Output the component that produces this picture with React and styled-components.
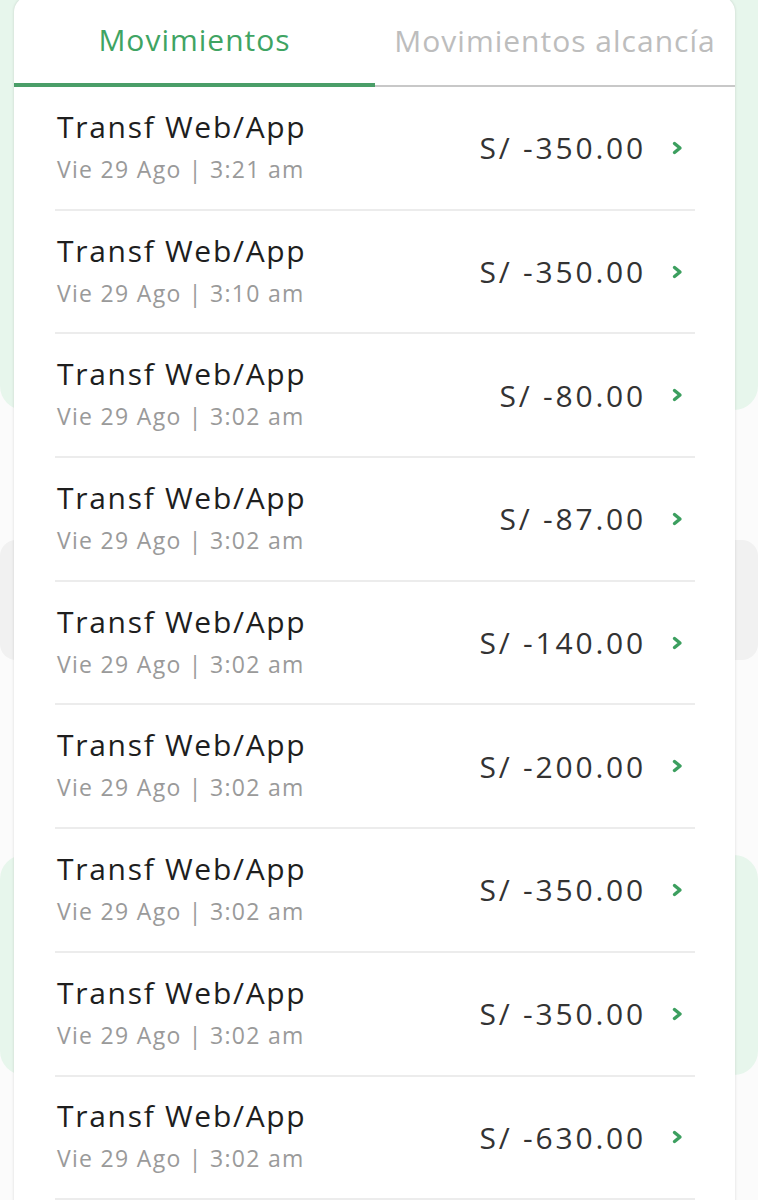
import styled, { createGlobalStyle } from 'styled-components'

const GlobalStyle = createGlobalStyle`
  html, body {
    margin: 0;
    padding: 0;
    background: #fbfbfb;
  }
  body {
    font-family: "Open Sans", "Liberation Sans", sans-serif;
  }
`

const movements = [
  { time: '3:21 am', amount: '-350.00' },
  { time: '3:10 am', amount: '-350.00' },
  { time: '3:02 am', amount: '-80.00' },
  { time: '3:02 am', amount: '-87.00' },
  { time: '3:02 am', amount: '-140.00' },
  { time: '3:02 am', amount: '-200.00' },
  { time: '3:02 am', amount: '-350.00' },
  { time: '3:02 am', amount: '-350.00' },
  { time: '3:02 am', amount: '-630.00' },
]

function Chevron() {
  return (
    <ChevronIcon viewBox="0 0 13 16">
      <polyline points="3.5,3.5 9,8 3.5,12.5" />
    </ChevronIcon>
  )
}

export default function App() {
  return (
    <Page>
      <GlobalStyle />
      <Backdrop>
        <GreenPanel $height={410} />
        <Spacer $height={130} />
        <GrayPanel $height={120} />
        <Spacer $height={195} />
        <GreenPanel $height={220} $top />
      </Backdrop>

      <Sheet>
        <Tabs>
          <Tab $active>Movimientos</Tab>
          <Tab>Movimientos alcancía</Tab>
        </Tabs>
        <List>
          {movements.map((m, i) => (
            <Row key={i}>
              <Info>
                <Title>Transf Web/App</Title>
                <DateText>Vie 29 Ago | {m.time}</DateText>
              </Info>
              <Amount>S/ {m.amount}</Amount>
              <Chevron />
            </Row>
          ))}
        </List>
      </Sheet>
    </Page>
  )
}

const Page = styled.div`
  position: relative;
  width: 758px;
  height: 1200px;
  overflow: hidden;
`

const Backdrop = styled.div`
  display: flex;
  flex-direction: column;
`

const Spacer = styled.div`
  height: ${p => p.$height}px;
`

const GreenPanel = styled.div`
  height: ${p => p.$height}px;
  background: #e7f6ec;
  border-radius: ${p => (p.$top ? '24px' : '0 0 24px 24px')};
`

const GrayPanel = styled.div`
  height: ${p => p.$height}px;
  background: #f1f1f1;
  border-radius: 16px;
`

const Sheet = styled.div`
  position: absolute;
  top: -4px;
  left: 14px;
  width: 721px;
  bottom: -20px;
  background: #fff;
  border-radius: 16px 16px 0 0;
  box-shadow: 0 0 3px rgba(0, 0, 0, 0.14);
`

const Tabs = styled.div`
  display: grid;
  grid-template-columns: 361px 1fr;
  height: 91px;
  padding-top: 4px;
  box-sizing: border-box;
  border-bottom: 2px solid #c8c8c8;
`

const Tab = styled.div`
  display: flex;
  align-items: center;
  justify-content: center;
  padding-bottom: 4px;
  margin-bottom: ${p => (p.$active ? '-2px' : '0')};
  font-size: 30px;
  letter-spacing: 1px;
  color: ${p => (p.$active ? '#3fa463' : '#bdbdbd')};
  font-weight: ${p => (p.$active ? 500 : 400)};
  border-bottom: ${p => (p.$active ? '4px solid #4a9e68' : '0')};
`

const List = styled.div`
  display: flex;
  flex-direction: column;
  padding: 0 40px 0 41px;
`

const Row = styled.div`
  display: flex;
  align-items: center;
  height: 123.7px;
  box-sizing: border-box;
  border-bottom: 2px solid #ececec;
  padding-right: 11px;
`

const Info = styled.div`
  display: flex;
  flex-direction: column;
  gap: 8px;
  flex: 1;
  margin-top: -2px;
  padding-left: 2px;
`

const Title = styled.div`
  font-size: 30px;
  font-weight: 500;
  color: #1e1e1e;
  line-height: 36px;
  letter-spacing: 1.7px;
`

const DateText = styled.div`
  font-size: 23px;
  color: #9a9a9a;
  line-height: 32px;
  letter-spacing: 1.3px;
`

const Amount = styled.div`
  font-size: 30px;
  color: #333;
  margin-right: 25px;
  letter-spacing: 2.8px;
`

const ChevronIcon = styled.svg`
  width: 13px;
  height: 16px;
  fill: none;
  stroke: #3c9f5f;
  stroke-width: 3.4;
  stroke-linecap: round;
  stroke-linejoin: round;
`
